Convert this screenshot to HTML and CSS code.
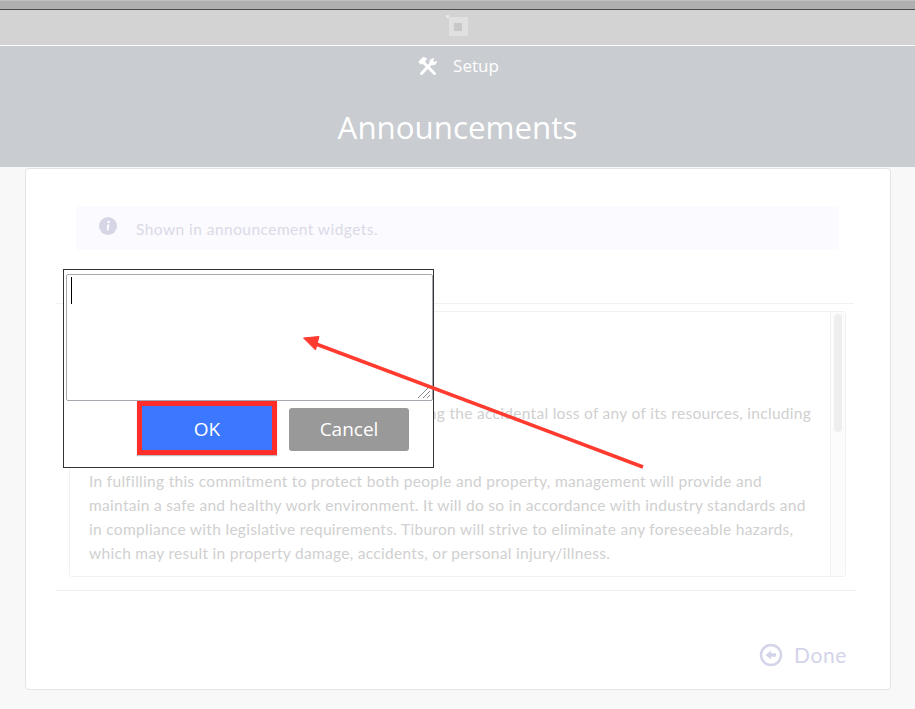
FILE: index.html
```html
<!DOCTYPE html>
<html lang="en">
<head>
<meta charset="utf-8">
<title>Announcements</title>
<link rel="stylesheet" href="styles.css">
</head>
<body>
<div class="chrome"></div>
<div class="toolbar">
  <svg class="capture" width="24" height="22" viewBox="0 0 24 22"><rect x="3" y="2" width="19" height="19" fill="#e0e0e0"/><rect x="8" y="8" width="8" height="8" fill="#c8c8c8"/><rect x="0" y="0" width="3" height="3" fill="#e6e6e6"/></svg>
</div>
<header class="hero">
  <div class="crumb">
    <svg width="20" height="20" viewBox="0 0 20 20" fill="none" stroke="#fff" stroke-linecap="round"><path d="M3.500 17.500 14.500 6" stroke-width="3"/><path d="M5 6 16.500 17.500" stroke-width="3"/><path d="M1 5.500 5 1.500 8.500 2.500 6 7 3 8z" fill="#fff" stroke-width="1"/><path d="M13 3.500 15.500 2.500 14.500 5 16 6.500 18.500 5.500 17.500 8 14.500 9 12 6.500z" fill="#fff" stroke-width="1"/></svg>
    <span>Setup</span>
  </div>
  <h1>Announcements</h1>
</header>
<main class="card">
  <div class="notice">
    <svg width="18" height="18" viewBox="0 0 18 18"><circle cx="9" cy="9" r="9" fill="#d5d5e6"/><circle cx="9.600" cy="5" r="1.300" fill="#fff"/><path d="M8.200 7.600h2.200l-1 5.800H7.700z" fill="#fff"/></svg>
    <span>Shown in announcement widgets.</span>
  </div>
  <div class="rule first"></div>
  <div class="scroller">
    <div class="doc">
      <p>Tiburon Group is committed to actively preventing the accidental loss of any of its resources, including<br>its employees and physical assets.</p>
      <p>In fulfilling this commitment to protect both people and property, management will provide and<br>maintain a safe and healthy work environment. It will do so in accordance with industry standards and<br>in compliance with legislative requirements. Tiburon will strive to eliminate any foreseeable hazards,<br>which may result in property damage, accidents, or personal injury/illness.</p>
    </div>
    <div class="track"><div class="thumb"></div></div>
  </div>
  <div class="rule last"></div>
  <div class="actions">
    <svg width="24" height="24" viewBox="0 0 24 24"><circle cx="12" cy="12" r="10" fill="none" stroke="#d3d3ea" stroke-width="2.400"/><path d="M6.500 12 12 7.500v2.800h5v3.400h-5v2.800z" fill="#d3d3ea"/></svg>
    <span>Done</span>
  </div>
</main>

<div class="dialog">
  <div class="input"><i class="caret"></i>
    <svg class="grip" width="14" height="14" viewBox="0 0 14 14" stroke="#8a8a8a" fill="none"><path d="M1 13 13 1M6 13l7-7M10 13l3-3"/></svg>
  </div>
  <div class="buttons">
    <button class="btn ok">OK</button>
    <button class="btn cancel">Cancel</button>
  </div>
</div>

<svg class="arrow" width="915" height="709" viewBox="0 0 915 709">
  <path d="M643 467 316 344" stroke="#ff3b30" stroke-width="3.500" fill="none"/>
  <path d="M303.500 338 319 336.500 315.500 350z" fill="#ff3b30" stroke="#ff3b30" stroke-linejoin="round"/>
</svg>
</body>
</html>
```
FILE: styles.css
```css
* { box-sizing: border-box; }
html, body { margin: 0; height: 709px; overflow: hidden; }
body { background: #f8f8f8; font-family: "Lato", sans-serif; position: relative; }

.chrome { height: 10px; background: #b0b0b0; border-top: 1px solid #c0c0c0; border-bottom: 1px solid #4a4a4a; }
.toolbar { height: 36px; background: #d3d3d3; border-bottom: 1px solid #fff; display: flex; justify-content: center; align-items: flex-start; padding-top: 5px; padding-left: 1px; }
.hero { height: 121px; background: #c9ccd0; color: #fff; font-family: "Open Sans", sans-serif; display: flex; flex-direction: column; align-items: center; }
.crumb { display: flex; align-items: center; gap: 15px; height: 20px; margin-top: 10px; padding-left: 2px; font-size: 17px; }
.crumb span { margin-top: -2px; }
.hero h1 { margin: 31px 0 0; font-size: 31.300px; font-weight: 400; line-height: 41px; }

.card { width: 866px; height: 522px; margin: 1px 0 0 25px; background: #fff; border: 1px solid #e4e4e4; border-radius: 4px; display: flex; flex-direction: column; padding: 37px 0 0 30px; }
.notice { width: 763px; margin-left: 20px; height: 44px; background: #fafaff; border-radius: 3px; display: flex; align-items: center; gap: 19px; padding: 2px 0 0 23px; color: #dadae6; font-size: 15.500px; letter-spacing: .45px; }
.notice svg { margin-top: -6px; }
.rule { height: 1px; width: 798px; background: #f1f1f1; }
.rule.first { margin-top: 53px; }
.rule.last { width: 800px; }
.scroller { width: 777px; height: 266px; margin: 7px 0 13px 13px; border: 1px solid #f1f1f1; border-radius: 3px; display: flex; }
.doc { flex: 1; min-width: 0; overflow: hidden; padding: 89.500px 0 0 19px; color: #d0d0d0; font-size: 15.500px; line-height: 23.700px; letter-spacing: .3px; white-space: nowrap; }
.doc p { margin: 0 0 21.500px; }
.track { width: 15px; background: #fcfcfc; border-left: 1px solid #f3f3f3; padding: 2px 3px; }
.thumb { width: 8px; height: 118px; background: #eeeeee; border-radius: 4px; }
.actions { margin-top: 51px; margin-left: 703px; display: flex; align-items: center; gap: 11px; color: #d3d3ea; font-size: 21px; letter-spacing: .6px; }

.dialog { position: absolute; left: 63px; top: 269px; width: 371px; height: 199px; background: #fff; border: 1px solid #333; padding: 4px 0 0 2px; }
.input { position: relative; width: 367px; height: 127px; border: 1px solid #a8a8b0; border-radius: 2px; background: #fff; }
.caret { position: absolute; left: 4px; top: 2px; width: 1px; height: 27px; background: #000; }
.grip { position: absolute; right: 1px; bottom: 1px; }
.buttons { display: flex; gap: 12px; padding-left: 71px; align-items: flex-start; }
.btn { font-family: "Open Sans", sans-serif; font-size: 19px; color: #fff; border: 0; }
.ok { width: 140px; height: 54px; padding: 2px 0 0; background: #3b78ff; border: 5px solid #ff2d2a; box-shadow: 0 1px 1px rgba(0,0,0,.25); }
.cancel { width: 120px; height: 43px; padding: 0 0 2px; margin-top: 7px; background: #999; border-radius: 3px; }
.arrow { position: absolute; left: 0; top: 0; pointer-events: none; }
```
